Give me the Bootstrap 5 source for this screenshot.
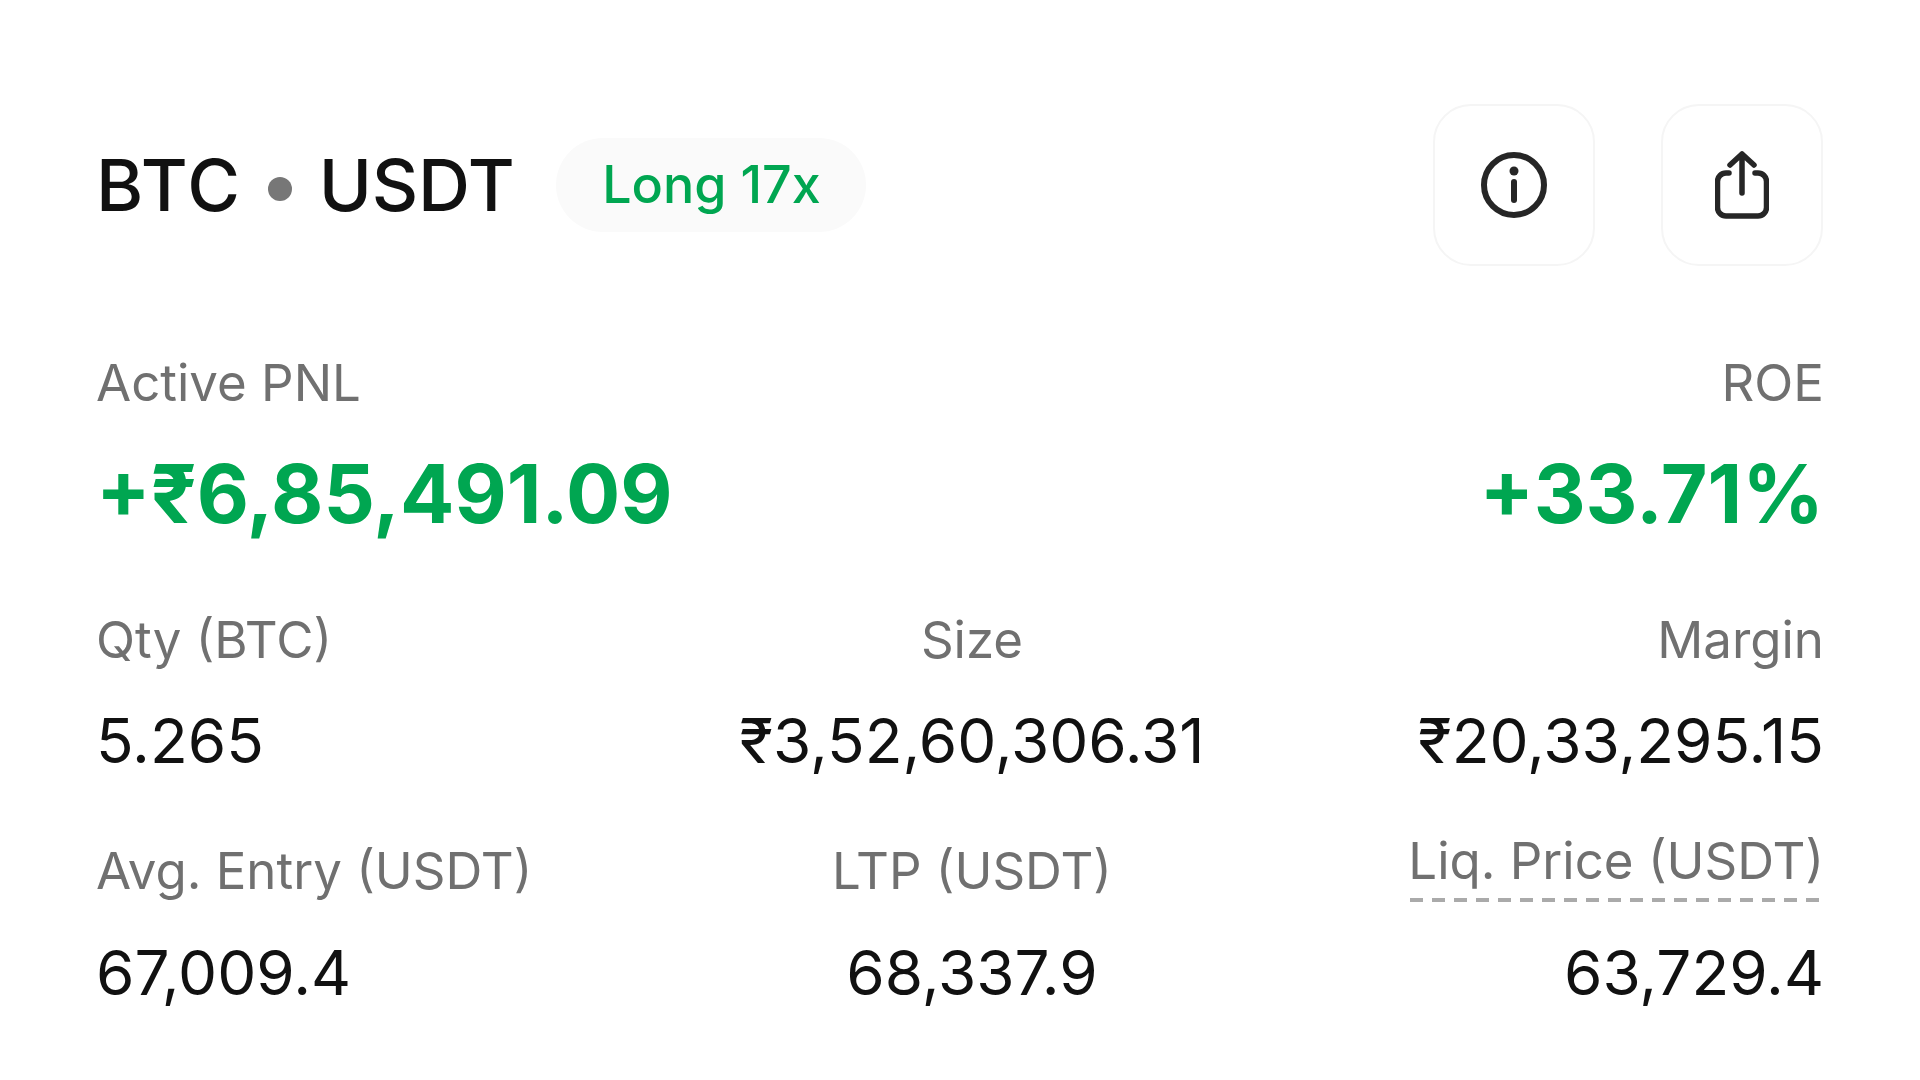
<!DOCTYPE html>
<html lang="en"><head><meta charset="utf-8">
<link href="https://cdn.jsdelivr.net/npm/bootstrap@5.3.0/dist/css/bootstrap.min.css" rel="stylesheet">
<style>
html,body{height:100%;background:#fff}
body{font-family:Inter,"Liberation Sans",sans-serif;color:#111}
.wrap{width:1920px;height:1080px;padding:104px 96px 0 96px}
.head{height:162px;margin-bottom:89px;padding-right:1px}
.pair{font-size:72px;font-weight:500;line-height:1;letter-spacing:1.6px}
.pair2{letter-spacing:-.2px}
.dot{width:24px;height:24px;border-radius:50%;background:#777;margin:8px 27px 0 26px}
.tag{height:94px;width:310px;margin-left:42px;border-radius:47px;background:#fafafa;color:#00a651;font-size:52px;font-weight:500}
.ibtn{width:162px;height:162px;border:2px solid #f5f5f5;border-radius:38px;margin-left:66px;background:#fff}
.lbl{font-size:51px;color:#707070;line-height:56px}
.big{font-size:80.500px;font-weight:700;color:#00a651;line-height:96px;margin-top:35px}
.val{font-size:62px;color:#111;line-height:70px}
.r1{margin-top:70px}
.r2{margin-top:67px}
.gap1{margin-top:38px}
.gap2{margin-top:39px}
.dash{display:block;width:max-content;margin:-8px 0 -3px auto;padding-bottom:15px;line-height:52px;background:linear-gradient(to right,#aaa 13px,transparent 13px) 2px bottom/22px 4px repeat-x}
.cl{flex:1 1 0;white-space:nowrap}
.mid{padding-left:24px}
</style></head><body>
<div class="wrap">
<div class="head d-flex align-items-center">
<div class="pair">BTC</div><div class="dot"></div><div class="pair pair2">USDT</div>
<div class="tag d-flex align-items-center justify-content-center">Long 17x</div>
<div class="ibtn d-flex align-items-center justify-content-center ms-auto">
<svg width="66" height="66" viewBox="0 0 66 66" fill="none" stroke="#262626" stroke-width="6" stroke-linecap="round"><circle cx="33" cy="33" r="30"/><path d="M33 30v18"/><circle cx="33" cy="19" r="4.500" fill="#262626" stroke="none"/></svg>
</div>
<div class="ibtn d-flex align-items-center justify-content-center">
<svg width="54" height="68" viewBox="0 0 54 68" fill="none" stroke="#262626" stroke-width="5.500" stroke-linecap="round" stroke-linejoin="round"><path d="M27 42V3M15 14 27 3l12 11"/><path d="M14 22h-3a8.500 8.500 0 0 0-8.500 8.500v26a8.500 8.500 0 0 0 8.500 8.500h32a8.500 8.500 0 0 0 8.500-8.500v-26a8.500 8.500 0 0 0-8.500-8.500h-3"/></svg>
</div>
</div>
<div class="d-flex justify-content-between lbl"><div>Active PNL</div><div>ROE</div></div>
<div class="d-flex justify-content-between big"><div>+₹6,85,491.09</div><div>+33.71%</div></div>
<div class="d-flex lbl r1"><div class="cl">Qty (BTC)</div><div class="cl mid text-center">Size</div><div class="cl text-end">Margin</div></div>
<div class="d-flex val gap1"><div class="cl">5.265</div><div class="cl mid text-center">₹3,52,60,306.31</div><div class="cl text-end">₹20,33,295.15</div></div>
<div class="d-flex lbl r2"><div class="cl">Avg. Entry (USDT)</div><div class="cl mid text-center">LTP (USDT)</div><div class="cl"><span class="dash">Liq. Price (USDT)</span></div></div>
<div class="d-flex val gap2"><div class="cl">67,009.4</div><div class="cl mid text-center">68,337.9</div><div class="cl text-end">63,729.4</div></div>
</div>
<script src="https://cdn.jsdelivr.net/npm/bootstrap@5.3.0/dist/js/bootstrap.bundle.min.js"></script>
</body></html>
